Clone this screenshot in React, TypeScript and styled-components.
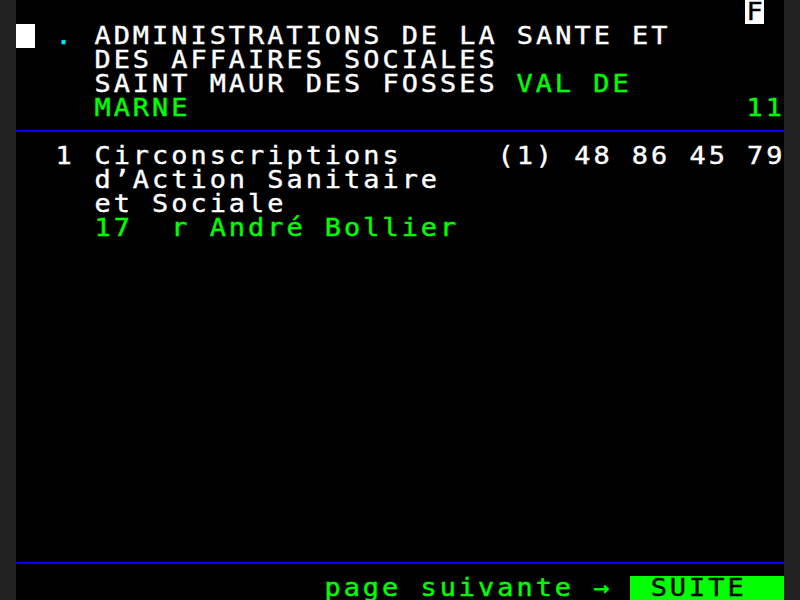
import React from 'react';
import styled, { createGlobalStyle } from 'styled-components';

// Minitel page: 40 columns x 25 rows, each cell 19.2 x 24 px
const COLS = 40;
const ROWS = 25;
const STRETCH = 1.12;

type Tint = 'white' | 'green' | 'cyan' | 'black';

const palette: Record<Tint, string> = {
  white: '#ffffff',
  green: '#00ff00',
  cyan: '#00e8ff',
  black: '#000000',
};

const GlobalStyle = createGlobalStyle`
  html, body {
    margin: 0;
    padding: 0;
    background: #222222;
  }
`;

const Frame = styled.div`
  width: 800px;
  height: 600px;
  display: flex;
  justify-content: center;
  background: #222222;
  overflow: hidden;
`;

const Screen = styled.main`
  width: 768px;
  height: 600px;
  background: #000000;
  display: flex;
  flex-direction: column;
  font-family: 'DejaVu Sans Mono', 'Liberation Mono', monospace;
  font-size: 24px;
`;

const Row = styled.div`
  height: 24px;
  display: grid;
  grid-template-columns: repeat(${COLS}, 19.2px);
  line-height: 24px;
`;

const Cells = styled.span<{ $col: number; $len: number; $fg: Tint; $bg?: Tint }>`
  grid-column: ${(p) => p.$col + 1} / span ${(p) => p.$len};
  height: 24px;
  color: ${(p) => palette[p.$fg]};
  background: ${(p) => (p.$bg ? palette[p.$bg] : 'transparent')};
  white-space: pre;
`;

// glyphs are a little wider than DejaVu's, so stretch each run sideways
const Glyphs = styled.span`
  display: inline-block;
  height: 24px;
  vertical-align: top;
  transform: scaleX(${STRETCH});
  transform-origin: left center;
  letter-spacing: ${19.2 / STRETCH - 14.45}px;
  padding-left: 1.3px;
  -webkit-text-stroke: 0.4px currentColor;
`;

const Rule = styled.div`
  height: 24px;
  padding-top: 10px;
  box-sizing: border-box;

  &::before {
    content: '';
    display: block;
    height: 2px;
    background: #0000f0;
  }
`;

type Run = { col: number; text: string; fg?: Tint; bg?: Tint };

const lines: (Run[] | 'rule')[] = [
  [{ col: 38, text: 'F', fg: 'black', bg: 'white' }],
  [
    { col: 0, text: ' ', bg: 'white' },
    { col: 2, text: '.', fg: 'cyan' },
    { col: 4, text: 'ADMINISTRATIONS DE LA SANTE ET' },
  ],
  [{ col: 4, text: 'DES AFFAIRES SOCIALES' }],
  [
    { col: 4, text: 'SAINT MAUR DES FOSSES' },
    { col: 26, text: 'VAL DE', fg: 'green' },
  ],
  [
    { col: 4, text: 'MARNE', fg: 'green' },
    { col: 38, text: '11', fg: 'green' },
  ],
  'rule',
  [
    { col: 2, text: '1' },
    { col: 4, text: 'Circonscriptions' },
    { col: 25, text: '(1) 48 86 45 79' },
  ],
  [{ col: 4, text: 'd’Action Sanitaire' }],
  [{ col: 4, text: 'et Sociale' }],
  [{ col: 4, text: '17  r André Bollier', fg: 'green' }],
];

const footer: (Run[] | 'rule')[] = [
  'rule',
  [
    { col: 16, text: 'page suivante →', fg: 'green' },
    { col: 32, text: ' SUITE  ', fg: 'black', bg: 'green' },
  ],
];

const blanks = ROWS - lines.length - footer.length;
const page = [...lines, ...Array.from({ length: blanks }, () => [] as Run[]), ...footer];

export default function App() {
  return (
    <Frame>
      <GlobalStyle />
      <Screen>
        {page.map((line, i) =>
          line === 'rule' ? (
            <Rule key={i} />
          ) : (
            <Row key={i}>
              {line.map((run, j) => (
                <Cells
                  key={j}
                  $col={run.col}
                  $len={run.text.length}
                  $fg={run.fg ?? 'white'}
                  $bg={run.bg}
                >
                  <Glyphs>{run.text}</Glyphs>
                </Cells>
              ))}
            </Row>
          ),
        )}
      </Screen>
    </Frame>
  );
}
